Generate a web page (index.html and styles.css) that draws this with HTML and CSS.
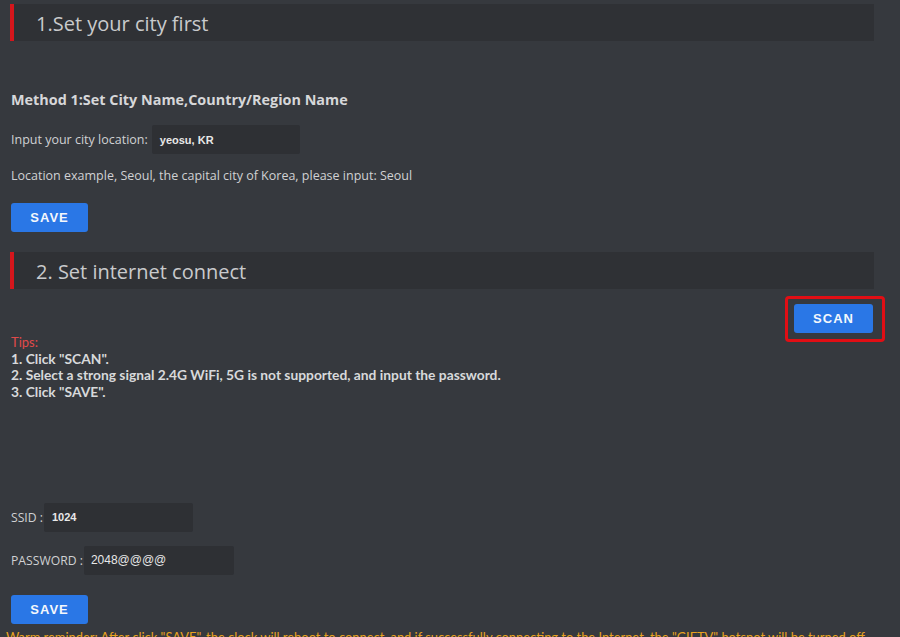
FILE: index.html
```html
<!DOCTYPE html>
<html>
<head>
<meta charset="utf-8">
<link rel="stylesheet" href="styles.css">
</head>
<body>
<div class="page">
  <div class="section-title">1.Set your city first</div>
  <div class="method">Method 1:Set City Name,Country/Region Name</div>
  <div class="row row-city">
    <span class="label">Input your city location:</span>
    <span class="field field-city">yeosu, KR</span>
  </div>
  <div class="hint">Location example, Seoul, the capital city of Korea, please input: Seoul</div>
  <div class="btn-row btn-row-save1"><button class="btn">SAVE</button></div>

  <div class="section-title section-title-2">2. Set internet connect</div>
  <div class="scan-row"><button class="btn btn-scan">SCAN</button></div>
  <div class="tips">
    <div class="tips-head">Tips:</div>
    <div>1. Click "SCAN".</div>
    <div>2. Select a strong signal 2.4G WiFi, 5G is not supported, and input the password.</div>
    <div>3. Click "SAVE".</div>
  </div>
  <div class="row row-ssid">
    <span class="label">SSID :</span>
    <span class="field field-ssid">1024</span>
  </div>
  <div class="row row-pass">
    <span class="label">PASSWORD :</span>
    <span class="field field-pass">2048@@@@</span>
  </div>
  <div class="btn-row btn-row-save2"><button class="btn">SAVE</button></div>
  <div class="warm">Warm reminder: After click "SAVE", the clock will reboot to connect, and if successfully connecting to the Internet, the "GIFTV" hotspot will be turned off.</div>
</div>
</body>
</html>
```

FILE: styles.css
```css
html, body {
  margin: 0;
  padding: 0;
  background: #36393e;
  height: 100%;
  overflow: hidden;
}
.page {
  padding: 4px 26px 0 10px;
  font-family: "Open Sans", "Noto Sans", sans-serif;
  color: #d2d3d5;
}
.section-title {
  height: 37px;
  line-height: 39px;
  background: #2f3135;
  border-left: 4px solid #d4161c;
  padding-left: 22px;
  font-size: 20px;
  color: #c9cacc;
  font-weight: 400;
  box-sizing: border-box;
}
.section-title-2 {
  margin-top: 20px;
}
.method {
  margin-top: 49px;
  margin-left: 1px;
  font-size: 14.4px;
  font-weight: 700;
  line-height: 20px;
  color: #d6d7d9;
}
.row {
  display: flex;
  align-items: center;
  margin-left: 1px;
}
.row-city { margin-top: 15px; }
.row-ssid { margin-top: 102px; }
.row-pass { margin-top: 14px; }
.label {
  font-size: 12.5px;
  color: #d0d1d3;
  margin-right: 4px;
}
.row-ssid .label,
.row-pass .label {
  font-size: 12.2px;
  margin-right: 1px;
}
.field {
  display: flex;
  align-items: center;
  height: 29px;
  background: #2e3034;
  border-radius: 2px;
  padding-left: 8px;
  box-sizing: border-box;
  font-family: "Liberation Sans", Arial, sans-serif;
  font-size: 11px;
  font-weight: 700;
  color: #e8e8e8;
}
.field-city { width: 148px; }
.field-ssid { width: 149px; padding-left: 8px; }
.field-pass { width: 150px; padding-left: 7px; font-weight: 400; font-size: 12px; }
.hint {
  margin-top: 13px;
  margin-left: 1px;
  font-size: 12.5px;
  line-height: 18px;
  color: #d0d1d3;
}
.btn-row { margin-left: 1px; }
.btn-row-save1 { margin-top: 18px; }
.btn-row-save2 { margin-top: 20px; }
.btn {
  display: block;
  width: 77px;
  height: 29px;
  border: 0;
  border-radius: 3px;
  background: #2a77e6;
  color: #f4f7fc;
  font-family: "Liberation Sans", Arial, sans-serif;
  font-size: 13px;
  font-weight: 700;
  letter-spacing: 1px;
  padding: 0;
}
.scan-row {
  display: flex;
  justify-content: flex-end;
  margin-top: 15px;
  padding-right: 1px;
}
.btn-scan {
  position: relative;
  width: 79px;
}
.btn-scan::after {
  content: "";
  position: absolute;
  left: -9px;
  top: -8px;
  right: -12px;
  bottom: -9px;
  border: 3px solid #e10e14;
  border-radius: 4px;
}
.tips {
  margin-top: 1px;
  margin-left: 1px;
  font-family: "Lato", sans-serif;
  font-size: 13.8px;
  font-weight: 700;
  line-height: 16.7px;
  color: #d8d9db;
}
.tips-head {
  color: #e04a4a;
  font-weight: 400;
  font-size: 13px;
}
.warm {
  margin-top: 3px;
  margin-left: -4px;
  white-space: nowrap;
  font-family: "Lato", sans-serif;
  font-size: 12.9px;
  line-height: 20px;
  color: #e8a21f;
}
```
